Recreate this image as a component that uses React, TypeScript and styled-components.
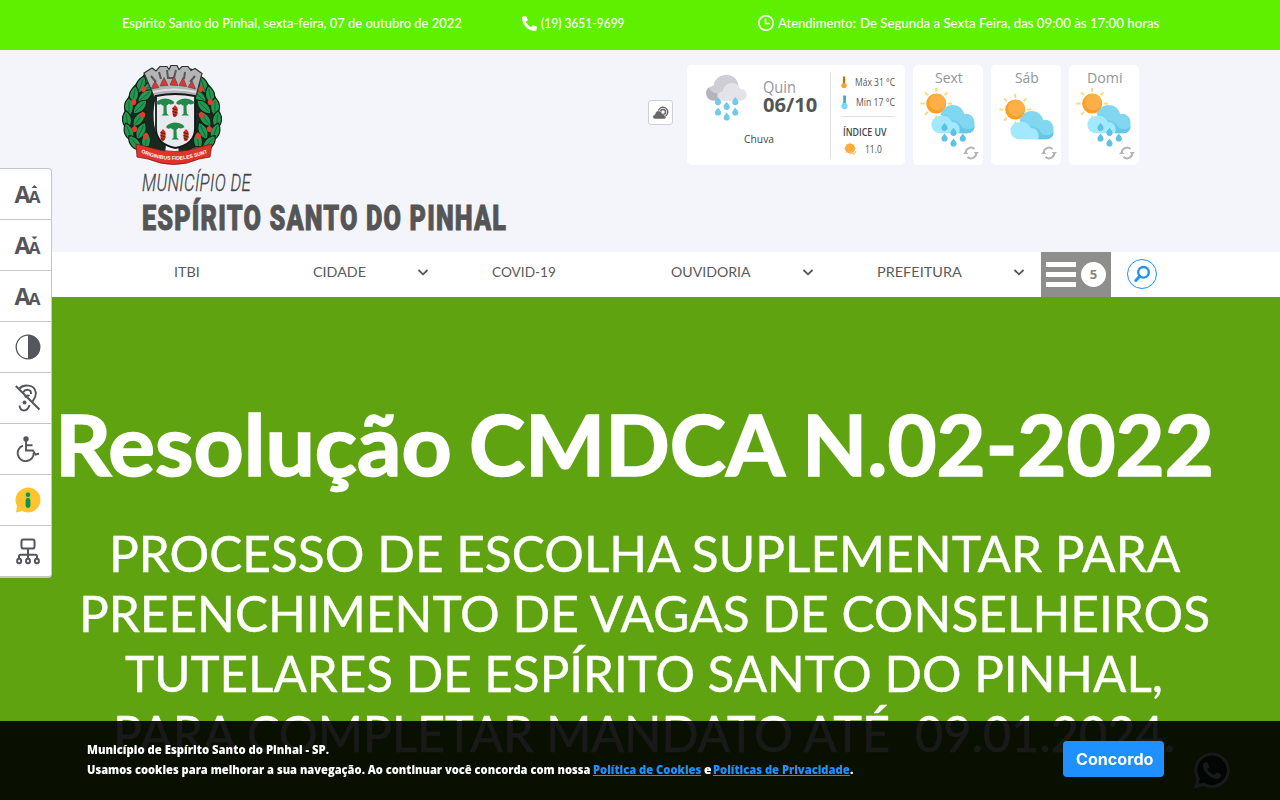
import React, { useLayoutEffect, useRef, useState } from "react";
import styled, { createGlobalStyle } from "styled-components";
import { FaPhoneAlt, FaWhatsapp } from "react-icons/fa";

const GlobalStyle = createGlobalStyle`
  * { box-sizing: border-box; }
  html, body { margin: 0; padding: 0; height: 100%; overflow: hidden; }
  body { font-family: "Lato", "Open Sans", sans-serif; background: #fff; }
`;

/* ---------- Text condensed or widened to a given measure ---------- */

const FitBox = styled.span<{ $width: number }>`
  display: inline-block;
  flex: none;
  width: ${(p) => p.$width}px;
  white-space: pre;
  vertical-align: top;
`;

const FitInner = styled.span`
  display: inline-block;
  transform-origin: 0 50%;
`;

function Fit({ width, children }: { width: number; children: React.ReactNode }) {
  const ref = useRef<HTMLSpanElement>(null);
  const [scale, setScale] = useState(1);
  useLayoutEffect(() => {
    const natural = ref.current ? ref.current.offsetWidth : 0;
    if (natural) setScale(width / natural);
  }, [width]);
  return (
    <FitBox $width={width}>
      <FitInner ref={ref} style={{ transform: `scaleX(${scale})` }}>{children}</FitInner>
    </FitBox>
  );
}

/* ---------- Page ---------- */

const Page = styled.div`
  width: 1280px;
  height: 800px;
  overflow: hidden;
  display: flex;
  flex-direction: column;
`;

const TopBar = styled.div`
  height: 50px;
  flex: none;
  background: #5ff000;
  color: #fff;
  font-size: 13px;
  line-height: 18px;
  font-weight: 500;
  padding: 14px 121px 0 122px;
  display: flex;
  align-items: flex-start;
`;

const TopItem = styled.div<{ $before?: number }>`
  display: flex;
  align-items: center;
  gap: 4px;
  height: 18px;
  margin-left: ${(p) => p.$before ?? 0}px;
`;

const Header = styled.header`
  height: 202px;
  flex: none;
  background: #f4f4fb;
  padding: 15px 0 0 122px;
  display: flex;
`;

const Brand = styled.div`
  width: 526px;
  display: flex;
  flex-direction: column;
`;

const BrandSmall = styled.div`
  margin: 5px 0 0 20px;
  font: italic 300 23.5px/26px "Roboto", sans-serif;
  letter-spacing: 0.5px;
  color: #444;
  -webkit-text-stroke: 0.3px #444;
`;

const BrandName = styled.div`
  margin: 4px 0 0 20px;
  font: 900 35px/38px "Roboto", sans-serif;
  letter-spacing: 1.6px;
  color: #555;
  -webkit-text-stroke: 0.9px #555;
`;

const Weather = styled.div`
  display: flex;
  align-items: flex-start;
  font-family: "Open Sans", sans-serif;
`;

const WeatherToggle = styled.button`
  width: 25px;
  height: 25px;
  margin: 35px 14px 0 0;
  padding: 0;
  background: #fff;
  border: 1px solid #cfcfd4;
  border-radius: 3px;
  display: flex;
  align-items: center;
  justify-content: center;
`;

const Today = styled.div`
  width: 218px;
  height: 100px;
  margin-right: 8px;
  background: #fff;
  border-radius: 5px;
  display: flex;
  padding: 7px 0 6px;
`;

const TodayMain = styled.div`
  width: 144px;
  border-right: 1px solid #e0e0e2;
`;

const TodayTop = styled.div`
  display: flex;
  padding: 2px 0 0 18px;
  gap: 14px;
`;

const TodayDate = styled.div`
  display: flex;
  flex-direction: column;
  padding-top: 4px;
`;

const DayName = styled.div`
  font-size: 15.5px;
  line-height: 18px;
  color: #95959c;
`;

const DateValue = styled.div`
  font-size: 19px;
  line-height: 18px;
  font-weight: 700;
  color: #555;
`;

const Condition = styled.div`
  font-size: 11px;
  line-height: 14px;
  color: #444;
  padding: 10px 0 0 57px;
`;

const TodaySide = styled.div`
  width: 74px;
  padding: 0 10px;
  display: flex;
  flex-direction: column;
  color: #555;
  font-size: 10px;
`;

const Temp = styled.div`
  height: 20px;
  display: flex;
  align-items: center;
  gap: 8px;
  line-height: 14px;
`;

const UvTitle = styled.div`
  border-top: 1px solid #e0e0e2;
  margin-top: 4px;
  padding: 8px 0 0 2px;
  font-size: 10px;
  line-height: 14px;
  font-weight: 600;
  color: #444;
`;

const UvRow = styled.div`
  display: flex;
  align-items: center;
  gap: 7px;
  height: 20px;
  padding-left: 2px;
`;

const DayCard = styled.div`
  position: relative;
  width: 70px;
  height: 100px;
  margin-right: 8px;
  background: #fff;
  border-radius: 5px;
  display: flex;
  flex-direction: column;
  align-items: center;
  padding: 3px 0 0 1px;
  font-size: 15px;
  line-height: 19px;
  color: #95959c;
`;

const Refresh = styled.span`
  position: absolute;
  right: 4px;
  bottom: 5px;
  display: flex;
`;

/* ---------- Navigation ---------- */

const Nav = styled.nav`
  height: 45px;
  flex: none;
  background: #fff;
  display: flex;
  padding-left: 174px;
  color: #5a5a5a;
  font-size: 14.3px;
  line-height: 20px;
`;

const NavItem = styled.a<{ $slot: number; $gap?: number }>`
  width: ${(p) => p.$slot}px;
  flex: none;
  display: flex;
  align-items: center;
  gap: ${(p) => p.$gap ?? 0}px;
  height: 40px;
`;

const MenuButton = styled.button`
  width: 70px;
  height: 45px;
  flex: none;
  padding: 0 5px;
  border: 0;
  background: #8e8e8c;
  display: flex;
  align-items: center;
  gap: 5px;
`;

const Burger = styled.span`
  width: 30px;
  height: 25px;
  border-top: 5px solid #fff;
  border-bottom: 5px solid #fff;
  padding: 5px 0;
  &::before { content: ""; display: block; height: 5px; background: #fff; }
`;

const Count = styled.span`
  width: 25px;
  height: 25px;
  border-radius: 50%;
  background: #fff;
  color: #858585;
  font: 700 13px/25px "Open Sans", sans-serif;
  text-align: center;
`;

const SearchButton = styled.button`
  width: 30px;
  height: 30px;
  margin: 7px 0 0 16px;
  padding: 0;
  border: 1px solid #1e90ff;
  border-radius: 50%;
  background: #fff;
  display: flex;
  align-items: center;
  justify-content: center;
`;

/* ---------- Banner ---------- */

const Banner = styled.main`
  flex: none;
  height: 503px;
  background: #60a311;
  color: #fff;
  padding: 97px 0 0 8px;
  display: flex;
  flex-direction: column;
  align-items: center;
`;

const BannerTitle = styled.h1`
  display: flex;
  gap: 17px;
  margin: 0 0 29px;
  padding-right: 20px;
  font-size: 83.5px;
  line-height: 100px;
  font-weight: 700;
  -webkit-text-stroke: 1.6px #fff;
`;

const BannerLine = styled.div`
  font-size: 49.5px;
  line-height: 60px;
  -webkit-text-stroke: 0.4px #fff;
`;

/* ---------- Accessibility rail ---------- */

const Rail = styled.aside`
  position: fixed;
  left: 0;
  top: 168px;
  width: 52px;
  background: #fff;
  border: 1px solid #c5c5ca;
  border-left: 0;
  border-bottom-width: 2px;
  border-radius: 0 4px 4px 0;
`;

const RailItem = styled.button`
  display: flex;
  align-items: center;
  justify-content: center;
  width: 51px;
  height: 51px;
  padding: 0 0 0 4px;
  border: 0;
  border-bottom: 1px solid #c5c5ca;
  background: transparent;
  &:last-child { border-bottom: 0; height: 50px; }
`;

/* ---------- Cookie notice ---------- */

const WhatsApp = styled.a`
  position: fixed;
  left: 1194px;
  top: 752px;
  width: 36px;
  height: 36px;
  border-radius: 50%;
  background: #00402c;
  color: #fff;
  display: flex;
  align-items: center;
  justify-content: center;
`;

const CookieBar = styled.div`
  position: fixed;
  left: 0;
  right: 0;
  bottom: 0;
  height: 79px;
  background: rgba(0, 0, 0, 0.9);
  display: flex;
  justify-content: space-between;
  padding: 20px 116px 0 87px;
`;

const CookieText = styled.div`
  font: 800 12px/20px "Open Sans", sans-serif;
  color: #fff;
  margin-top: -1px;
`;

const CookieLine = styled.div`
  display: flex;
`;

const CookieLink = styled.a`
  color: #1e90ff;
  border-bottom: 1px solid #1e90ff;
  height: 16px;
`;

const Joiner = styled.span`
  padding: 0 2px 0 3px;
`;

const Agree = styled.button`
  width: 101px;
  height: 36px;
  border: 0;
  border-radius: 4px;
  background: #1e90ff;
  color: #fff;
  padding: 1px 0 0;
  font: 700 15.5px/36px "Inter", sans-serif;
`;

/* ---------- Drawings ---------- */

function Chevron() {
  return (
    <svg width="12" height="8" viewBox="0 0 12 8" fill="none" stroke="#555" strokeWidth="1.800">
      <path d="M1.500 2 6 6.300l4.500-4.300" />
    </svg>
  );
}

const WREATH_LEAVES = [
  [26, 12, 35], [19, 20, 20], [29, 21, 60], [12, 30, 10], [23, 31, 50], [7, 42, 0], [18, 42, 45],
  [5, 55, -8], [17, 54, 38], [7, 67, -20], [19, 66, 25], [13, 78, -40], [24, 76, 5], [28, 87, -60],
];

const BERRIES = [[22, 24], [12, 37], [21, 50], [13, 64], [24, 71]];

function Wreath() {
  return (
    <g>
      <path d="M25 8C4 22-4 52 8 76c6 11 20 18 34 21l2-17C28 72 30 40 36 26z" fill="#17291f" />
      {WREATH_LEAVES.map(([x, y, turn]) => (
        <g key={`${x}-${y}`} transform={`translate(${x} ${y}) rotate(${turn})`}>
          <path d="M0-9.500C6-4 6 4 0 9.500-6 4-6-4 0-9.500z" fill="#22984f" stroke="#16221b" strokeWidth="1.200" />
          <path d="M0-6V7" stroke="#17653a" strokeWidth=".9" />
        </g>
      ))}
      {BERRIES.map(([x, y]) => (
        <path key={y} d={`M${x - 3.5} ${y - 0.5}l3-3 3 2.500-1 3.500-3 1z`} fill="#e83a2d" />
      ))}
    </g>
  );
}

function Tree({ x, y }: { x: number; y: number }) {
  return (
    <path
      transform={`translate(${x} ${y})`}
      d="M-9 0q2-4 9-4.500 8 .5 9.500 4.500-3 2.500-6 .8-1 2-2 1.700l.3 8 2.200 2h-7.500l2-2v-8q-1.500.5-2.500-1.500-3 2-5-1z"
      fill="#23894b"
    />
  );
}

function Cone({ x, y }: { x: number; y: number }) {
  return (
    <g transform={`translate(${x} ${y})`}>
      <path d="M0-6l2.500 3v6l-2 3h-2l-1-3v-6z" fill="#d8291f" />
      <path d="M-2.500-2.500 2.500-1M-2.500.5 2.500 2M-2 3.500l3.500 1" stroke="#4a1512" strokeWidth=".9" />
    </g>
  );
}

function Crest() {
  return (
    <svg width="100" height="100" viewBox="0 0 100 100">
      <Wreath />
      <g transform="translate(100 0) scale(-1 1)"><Wreath /></g>
      <path d="M22 8 30 3l4 3 4-4.500h7l2 3 2-4h6l2 4 3-3h6l3 4 4-2 7 5-6 23q-20-5-42 0z" fill="#b4b4b7" stroke="#333" strokeWidth="1.200" />
      <path d="M29 11l5 6M37 7l2 7M45 5l1 8h6l2-8M63 7l-1 7M73 11l-5 6" stroke="#56565b" strokeWidth="2" fill="none" />
      <path d="M31 27q21-5 43 0" stroke="#e0e0e3" strokeWidth="2" fill="none" />
      <path d="M29 24l4-8 4 6.500zM38 21l4-8.500 4 8zM48 20l4-9 4 9.500zM57 20.500l4-8 3.500 9zM66 22l4-6 3.500 8z" fill="#e5342a" stroke="#4a4a4d" strokeWidth=".7" />
      <path d="M34 31q19-4 39 0v32c0 12-9 18-19.500 20C43 81 34 75 34 63z" fill="#e9eaee" stroke="#14181a" strokeWidth="1.800" />
      <Tree x={43} y={38} /><Tree x={63} y={38} /><Tree x={53} y={62} />
      <Cone x={53} y={46} /><Cone x={41} y={70} /><Cone x={64} y={70} />
      <path d="M14 79l12 3q27 9 52 0l12-3-2 13-11 2q-25 11-51 0l-11-2z" fill="#e2332b" stroke="#7a1b17" strokeWidth=".8" />
      <path id="ribbon" d="M19 87.500Q51 102.500 88 87" fill="none" />
      <text fill="#fff" fontSize="5.100" fontWeight="700" fontFamily="Liberation Sans, sans-serif">
        <textPath href="#ribbon">ORIGINIBUS FIDELES SUNT</textPath>
      </text>
    </svg>
  );
}

function Drop({ x, y, fill = "#6fcbe9" }: { x: number; y: number; fill?: string }) {
  return <path d={`M${x} ${y - 4.2}c1 2 3.100 3 3.100 5a3.100 3.100 0 0 1-6.200 0c0-2 2.100-3 3.100-5z`} fill={fill} />;
}

function RainCloud() {
  return (
    <svg width="44" height="48" viewBox="0 0 44 48">
      <path d="M8 26.500C1 26-1 17 4 13.500 6 12 8 12 8.500 11.500 11-2 29-3 33 9l2 14-22 3.500z" fill="#cfced4" />
      <path d="M8 26.500C1 26-1 17 4 13.500c2 5 8 7 11 6l-2 7z" fill="#b5b4bc" />
      <path d="M18 26.700c-8 0-7-9-.5-9C19 7 33 6 35 15c9 0 9 11.700 0 11.700z" fill="#e4e3e9" />
      {[[13, 27.3], [21.7, 32], [30.3, 27.3], [13, 37.7], [30.3, 37.7], [21.7, 42.7]].map(([x, y]) => (
        <Drop key={`${x}-${y}`} x={x} y={y} />
      ))}
    </svg>
  );
}

function SunCloud({ rain }: { rain?: boolean }) {
  const rays = [0, 45, 90, 135, 180, 225, 270, 315];
  return (
    <svg width="58" height="62" viewBox="0 0 58 62">
      <g transform={rain ? "translate(-.5 -.7)" : "translate(.5 5.300)"}>
        {rays.map((r) => (
          <path key={r} d="M16.700 5.500V1.500" stroke="#ffd878" strokeWidth="1.900" transform={`rotate(${r} 16.700 17.300)`} />
        ))}
        <circle cx="16.700" cy="17.300" r="10" fill="#ff9f22" />
        <circle cx="17.800" cy="15.800" r="8.300" fill="#ffaf48" />
        <path d="M21 28C25 16 41 15 45 28c4-2 10 2 10 8v4c0 4-3 7-7 7H34z" fill="#82d7f0" />
        <path d="M21 28c7 0 10 2 12 7 5-1 9 5 7 12h8c4 0 7-3 7-7-3 4-10 4-13 0-1-3-6-6-9-6-3-5-7-7-12-6z" fill="#65c8e6" />
        <path d="M20 47c-10-1-11-15-1-17 7-2 12 2 13 6 4-1 8 3 8 8l-1 3z" fill="#a2e8ff" />
        {rain && (
          <g>
            {[[25, 40.7], [34, 45.7], [43.3, 51.3], [25, 51.3], [34, 56.3]].map(([x, y]) => (
              <Drop key={`${x}-${y}`} x={x} y={y} fill="#5ec3e2" />
            ))}
          </g>
        )}
      </g>
    </svg>
  );
}

function Thermometer({ fill, bulb }: { fill: string; bulb: string }) {
  return (
    <svg width="8" height="17" viewBox="0 0 8 17">
      <path d="M2.500.5h3v10h-3z" fill={fill} />
      <path d="M4.500 2h1.500M4.500 4.500h1.500M4.500 7h1.500" stroke="#777" strokeWidth=".7" />
      <circle cx="4" cy="12.600" r="3.600" fill={bulb} />
    </svg>
  );
}

function RefreshIcon() {
  return (
    <svg width="16" height="14" viewBox="0 0 16 14" fill="none" stroke="#b5b5b5" strokeWidth="2">
      <path d="M2.700 7A5.300 5.300 0 0 1 11.500 3M13.300 7A5.300 5.300 0 0 1 4.500 11" />
      <path d="M0 8h5.400L2.700 5zM10.600 6H16L13.300 9z" fill="#b5b5b5" stroke="none" />
    </svg>
  );
}

function FontIcon({ mark }: { mark?: "up" | "down" }) {
  return (
    <svg width="30" height="38" viewBox="-2 -9 30 38" fill="#54565b" fontFamily="Open Sans, sans-serif" fontWeight="700">
      <text x="-.5" y="18.500" fontSize="23.500" textLength="16" lengthAdjust="spacingAndGlyphs">A</text>
      <text x="13.500" y="18.500" fontSize="16.500" textLength="12" lengthAdjust="spacingAndGlyphs">A</text>
      {mark === "up" && <path d="M16.500 4 19.500 1l3 3z" />}
      {mark === "down" && <path d="M16.500 1.500 19.500 4.500l3-3z" />}
    </svg>
  );
}

function ContrastIcon() {
  return (
    <svg width="26" height="26" viewBox="0 0 26 26">
      <circle cx="13" cy="13" r="11.800" fill="none" stroke="#54565b" strokeWidth="1.300" />
      <path d="M13 1a12 12 0 0 1 0 24z" fill="#54565b" />
    </svg>
  );
}

function EarIcon() {
  return (
    <svg width="26" height="28" viewBox="0 0 26 28" fill="none" stroke="#54565b" strokeWidth="1.900">
      <path d="M4.500 4.500C8 .5 19.500-.5 20.800 8.500c.5 4-1.500 6.500-3.300 9M8 8.500C10.500 4.500 16.500 5 16 10M14.500 21c-1 3.500-3 5.500-5.500 5.500-2.500 0-4.200-2-4.400-5M10 13.500c1-2 3-2.500 4.500-1.500" />
      <circle cx="9.500" cy="18.500" r="2" fill="#54565b" stroke="none" />
      <path d="M.8 2 24.500 25.500" strokeWidth="2" />
    </svg>
  );
}

function WheelchairIcon() {
  return (
    <svg width="24" height="26" viewBox="0 0 24 26" fill="none" stroke="#54565b" strokeWidth="1.900">
      <circle cx="10" cy="3" r="2.700" fill="#54565b" stroke="none" />
      <path d="M10 5v9.500h7l2.500 4.200 3.500-1.200M10 9.300h6.500" />
      <path d="M7 9.600A8 8 0 1 0 17.700 17" />
    </svg>
  );
}

function InfoIcon() {
  return (
    <svg width="26" height="26" viewBox="0 0 26 26">
      <path d="M13 .5A12.500 12.500 0 1 1 7 24L1 25.500 2 19A12.500 12.500 0 0 1 13 .5z" fill="#ffc42e" />
      <circle cx="13" cy="7.800" r="2.300" fill="#00964f" />
      <rect x="10.600" y="11" width="4.800" height="10" rx="2.400" fill="#00964f" />
    </svg>
  );
}

function SitemapIcon() {
  return (
    <svg width="24" height="27" viewBox="0 0 24 27" fill="none" stroke="#54565b" strokeWidth="2">
      <rect x="5.500" y="1.500" width="13" height="9" rx="1.800" />
      <path d="M12 10.500V21M3 21v-2.700c0-1 .5-1.500 1.500-1.500h15c1 0 1.500.5 1.500 1.500V21" />
      <rect x="1.200" y="20.700" width="3.800" height="4.500" rx="1.700" />
      <rect x="10.100" y="20.700" width="3.800" height="4.500" rx="1.700" />
      <rect x="19" y="20.700" width="3.800" height="4.500" rx="1.700" />
    </svg>
  );
}

export default function App() {
  return (
    <Page>
      <GlobalStyle />
      <TopBar>
        <TopItem><Fit width={340}>Espírito Santo do Pinhal, sexta-feira, 07 de outubro de 2022</Fit></TopItem>
        <TopItem $before={60}>
          <FaPhoneAlt size={15} />
          <Fit width={84}>(19) 3651-9699</Fit>
        </TopItem>
        <TopItem $before={133}>
          <svg width="16" height="16" viewBox="0 0 16 16" fill="none" stroke="#fff" strokeWidth="1.600">
            <circle cx="8" cy="8" r="7.200" />
            <path d="M7.500 3.500v5H12" />
          </svg>
          <Fit width={78}>Atendimento:</Fit>
          <Fit width={299}>De Segunda a Sexta Feira, das 09:00 às 17:00 horas</Fit>
        </TopItem>
      </TopBar>

      <Header>
        <Brand>
          <Crest />
          <BrandSmall><Fit width={109}>MUNICÍPIO DE</Fit></BrandSmall>
          <BrandName><Fit width={365}>ESPÍRITO SANTO DO PINHAL</Fit></BrandName>
        </Brand>
        <Weather>
          <WeatherToggle aria-label="Previsão do tempo">
            <svg width="17" height="14" viewBox="0 0 17 14">
              <circle cx="11" cy="6" r="4.700" fill="none" stroke="#666" strokeWidth="1.500" />
              <circle cx="11" cy="6" r="2.500" fill="none" stroke="#666" strokeWidth="1.400" />
              <path d="M3.500 13C0 13 0 9 3 8.500c.5-4.500 5.500-5 7-1 2 0 2.600 1.500 2.600 2.300 2 .5 1.500 3.200-.3 3.200z" fill="#666" stroke="#fff" strokeWidth=".5" />
            </svg>
          </WeatherToggle>
          <Today>
            <TodayMain>
              <TodayTop>
                <RainCloud />
                <TodayDate>
                  <DayName><Fit width={33}>Quin</Fit></DayName>
                  <DateValue><Fit width={54}>06/10</Fit></DateValue>
                </TodayDate>
              </TodayTop>
              <Condition><Fit width={30}>Chuva</Fit></Condition>
            </TodayMain>
            <TodaySide>
              <Temp><Thermometer fill="#b87418" bulb="#f9a22c" /><Fit width={40}>Máx 31 °C</Fit></Temp>
              <Temp><Thermometer fill="#4aa9bd" bulb="#7ad9f5" /><Fit width={39}>Min 17 °C</Fit></Temp>
              <UvTitle><Fit width={43}>ÍNDICE UV</Fit></UvTitle>
              <UvRow>
                <svg width="15" height="14" viewBox="0 0 15 14">
                  {[0, 45, 90, 135, 180, 225, 270, 315].map((r) => (
                    <path key={r} d="M7 1.500V.2" stroke="#ffd27a" transform={`rotate(${r} 7 6.500)`} />
                  ))}
                  <circle cx="7" cy="6.500" r="5" fill="#ffab3d" />
                  <path d="M8 9v2q1 1.500 2 0l1 2 2-4" fill="none" stroke="#ffc978" />
                </svg>
                <Fit width={17}>11.0</Fit>
              </UvRow>
            </TodaySide>
          </Today>
          <DayCard><Fit width={28}>Sext</Fit><SunCloud rain /><Refresh><RefreshIcon /></Refresh></DayCard>
          <DayCard><Fit width={24}>Sáb</Fit><SunCloud /><Refresh><RefreshIcon /></Refresh></DayCard>
          <DayCard><Fit width={36}>Domi</Fit><SunCloud rain /><Refresh><RefreshIcon /></Refresh></DayCard>
        </Weather>
      </Header>

      <Nav>
        <NavItem $slot={139}><Fit width={26}>ITBI</Fit></NavItem>
        <NavItem $slot={179} $gap={51}><Fit width={53}>CIDADE</Fit><Chevron /></NavItem>
        <NavItem $slot={179}><Fit width={64}>COVID-19</Fit></NavItem>
        <NavItem $slot={206} $gap={51}><Fit width={80}>OUVIDORIA</Fit><Chevron /></NavItem>
        <NavItem $slot={164} $gap={51}><Fit width={85}>PREFEITURA</Fit><Chevron /></NavItem>
        <MenuButton><Burger /><Count>5</Count></MenuButton>
        <SearchButton aria-label="Buscar">
          <svg width="18" height="18" viewBox="0 0 18 18" fill="none" stroke="#1e90ff">
            <circle cx="10.500" cy="7.300" r="5.300" strokeWidth="2.300" />
            <path d="M6.700 11.300 2.800 15.500" strokeWidth="3" strokeLinecap="round" />
          </svg>
        </SearchButton>
      </Nav>

      <Banner>
        <BannerTitle>
          <Fit width={397}>Resolução</Fit>
          <Fit width={316}>CMDCA</Fit>
          <Fit width={412}>N.02-2022</Fit>
        </BannerTitle>
        <BannerLine><Fit width={1071}>PROCESSO DE ESCOLHA SUPLEMENTAR PARA</Fit></BannerLine>
        <BannerLine><Fit width={1131}>PREENCHIMENTO DE VAGAS DE CONSELHEIROS</Fit></BannerLine>
        <BannerLine><Fit width={1038}>TUTELARES DE ESPÍRITO SANTO DO PINHAL,</Fit></BannerLine>
        <BannerLine><Fit width={1062}>{"PARA COMPLETAR MANDATO ATÉ  09.01.2024."}</Fit></BannerLine>
      </Banner>

      <Rail>
        <RailItem><FontIcon mark="up" /></RailItem>
        <RailItem><FontIcon mark="down" /></RailItem>
        <RailItem><FontIcon /></RailItem>
        <RailItem><ContrastIcon /></RailItem>
        <RailItem><EarIcon /></RailItem>
        <RailItem><WheelchairIcon /></RailItem>
        <RailItem><InfoIcon /></RailItem>
        <RailItem><SitemapIcon /></RailItem>
      </Rail>

      <WhatsApp aria-label="WhatsApp"><FaWhatsapp size={41} /></WhatsApp>

      <CookieBar>
        <CookieText>
          <CookieLine><Fit width={242}>Município de Espírito Santo do Pinhal - SP.</Fit></CookieLine>
          <CookieLine>
            <Fit width={506}>{"Usamos cookies para melhorar a sua navegação. Ao continuar você concorda com nossa "}</Fit>
            <CookieLink><Fit width={108}>Política de Cookies</Fit></CookieLink>
            <Joiner><Fit width={7}>e</Fit></Joiner>
            <CookieLink><Fit width={137}>Políticas de Privacidade</Fit></CookieLink>
            <span>.</span>
          </CookieLine>
        </CookieText>
        <Agree><Fit width={77}>Concordo</Fit></Agree>
      </CookieBar>
    </Page>
  );
}
